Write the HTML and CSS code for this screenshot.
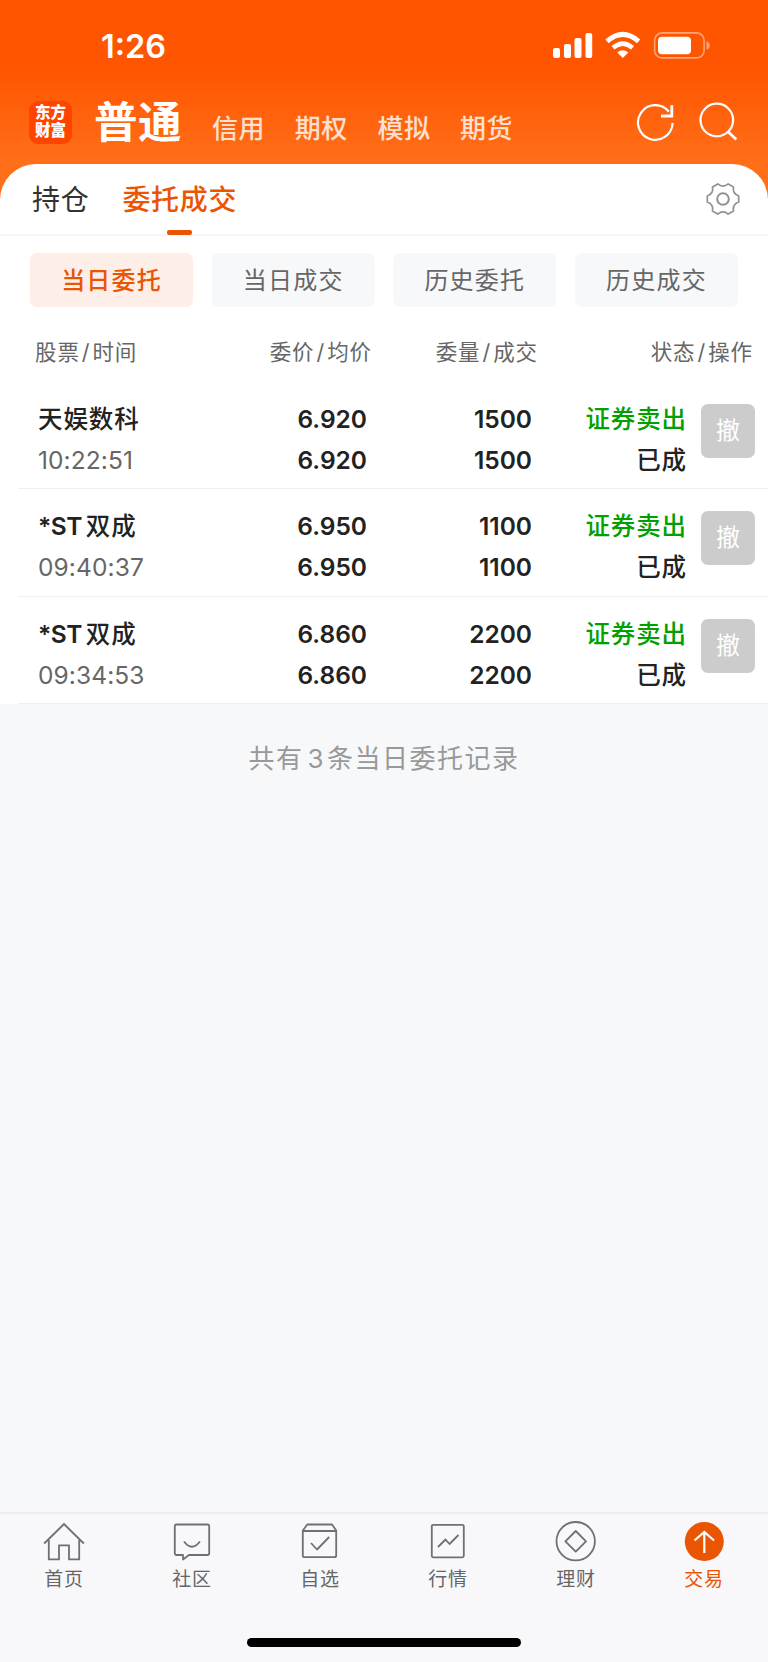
FILE: index.html
```html
<!DOCTYPE html>
<html lang="zh-CN">
<head>
    <meta charset="UTF-8">
    <meta name="viewport" content="width=device-width, initial-scale=1.0">
    <title>委托成交</title>
    <link rel="stylesheet" href="styles.css">
</head>
<body>
    <div class="top">
        <div class="status-bar">
            <span class="time">1:26</span>
            <svg class="status-icons" width="160" height="28" viewBox="0 0 160 28">
                <g fill="#fff">
                    <rect x="1" y="17" width="7" height="10" rx="2"/>
                    <rect x="12" y="13" width="7" height="14" rx="2"/>
                    <rect x="22.5" y="7" width="7" height="20" rx="2"/>
                    <rect x="33.5" y="2" width="6.7" height="25" rx="2"/>
                    <path d="M70.800 27 L65.300 21.500 Q70.800 16.800 76.300 21.500 Z"/>
                    <rect x="106" y="5.800" width="33" height="17.500" rx="4"/>
                </g>
                <path d="M55 10.300 Q70.800 -3.500 86.600 10.300" fill="none" stroke="#fff" stroke-width="5"/>
                <path d="M61 16.800 Q70.800 8.300 80.600 16.800" fill="none" stroke="#fff" stroke-width="4.500"/>
                <rect x="102.600" y="1.900" width="49.500" height="25" rx="7.500" fill="none" stroke="#ffa478" stroke-width="1.600"/>
                <path d="M154.500 10.200 Q157.800 11.500 157.800 14.400 Q157.800 17.300 154.500 18.600 Z" fill="#ffa478"/>
            </svg>
        </div>
        <div class="header">
            <div class="logo"><span>东方</span><span>财富</span></div>
            <a class="account active">普通</a>
            <a class="account">信用</a>
            <a class="account">期权</a>
            <a class="account">模拟</a>
            <a class="account">期货</a>
            <div class="tools">
                <svg width="40" height="40" viewBox="0 0 40 40" fill="none" stroke="#fff" stroke-width="2.200">
                    <path d="M36.600 21 A17.300 17.300 0 1 1 32.900 9.800"/>
                    <path d="M35.800 3.200 V14 H25" stroke-width="2.800"/>
                </svg>
                <svg width="40" height="40" viewBox="0 0 40 40" fill="none" stroke="#fff" stroke-width="2.200">
                    <circle cx="17.800" cy="18" r="16.300"/>
                    <path d="M29.300 30 L37.300 37.500" stroke-width="2.800"/>
                </svg>
            </div>
        </div>
    </div>

    <div class="panel">
        <div class="tabs">
            <a class="tab">持仓</a>
            <a class="tab active">委托成交</a>
            <svg class="gear" width="34" height="34" viewBox="-17 -17 34 34" fill="none" stroke="#919191" stroke-width="1.700" stroke-linejoin="round">
                <path d="M15.700 -3 V3 Q9.200 5.300 10.500 12.100 L5.200 15.100 Q0 10.800 -5.200 15.100 L-10.500 12.100 Q-9.200 5.300 -15.700 3 V-3 Q-9.200 -5.300 -10.500 -12.100 L-5.200 -15.100 Q0 -10.800 5.200 -15.100 L10.500 -12.100 Q9.200 -5.300 15.700 -3 Z"/>
                <circle r="5.800" stroke-width="2"/>
            </svg>
        </div>

        <div class="filters">
            <a class="filter active">当日委托</a>
            <a class="filter">当日成交</a>
            <a class="filter">历史委托</a>
            <a class="filter">历史成交</a>
        </div>

        <div class="table-head">
            <span>股票<i>/</i>时间</span>
            <span>委价<i>/</i>均价</span>
            <span>委量<i>/</i>成交</span>
            <span>状态<i>/</i>操作</span>
        </div>

        <div class="orders">
            <div class="order">
                <div class="stock"><b>天娱数科</b><span>10:22:51</span></div>
                <div class="num"><b>6.920</b><b>6.920</b></div>
                <div class="num"><b>1500</b><b>1500</b></div>
                <div class="state"><b class="sell">证券卖出</b><b>已成</b></div>
                <button class="cancel">撤</button>
            </div>
            <div class="order">
                <div class="stock"><b><em>*ST</em>双成</b><span>09:40:37</span></div>
                <div class="num"><b>6.950</b><b>6.950</b></div>
                <div class="num"><b>1100</b><b>1100</b></div>
                <div class="state"><b class="sell">证券卖出</b><b>已成</b></div>
                <button class="cancel">撤</button>
            </div>
            <div class="order">
                <div class="stock"><b><em>*ST</em>双成</b><span>09:34:53</span></div>
                <div class="num"><b>6.860</b><b>6.860</b></div>
                <div class="num"><b>2200</b><b>2200</b></div>
                <div class="state"><b class="sell">证券卖出</b><b>已成</b></div>
                <button class="cancel">撤</button>
            </div>
        </div>
    </div>

    <div class="total">共有<span>3</span>条当日委托记录</div>

    <div class="bottom">
        <div class="nav">
            <a class="nav-item">
                <svg width="42" height="42" viewBox="0 0 42 42">
                    <path d="M1.200 22.500 L21 3 L40.800 22.500 M5.800 19 V38.400 H16 V24.300 H26 V38.400 H36.200 V19"/>
                </svg>
                <span>首页</span>
            </a>
            <a class="nav-item">
                <svg width="42" height="42" viewBox="0 0 42 42">
                    <path d="M5.500 3.500 H36.500 Q38.200 3.500 38.200 5.200 V32.300 Q38.200 34 36.500 34 H18 L12 38.500 V34 H5.500 Q3.800 34 3.800 32.300 V5.200 Q3.800 3.500 5.500 3.500 Z"/>
                    <path d="M13 20.500 Q20.800 31 29 20.500"/>
                </svg>
                <span>社区</span>
            </a>
            <a class="nav-item">
                <svg width="42" height="42" viewBox="0 0 42 42">
                    <path d="M3.800 9.500 L8.300 3.500 H33 L37.200 9.500 V34.500 Q37.200 36.200 35.500 36.200 H5.500 Q3.800 36.200 3.800 34.500 Z M3.800 10 H37.200"/>
                    <path d="M12 22 L18 28.500 L30.200 16"/>
                </svg>
                <span>自选</span>
            </a>
            <a class="nav-item">
                <svg width="42" height="42" viewBox="0 0 42 42">
                    <rect x="4.800" y="3.800" width="32" height="32.500" rx="1.500"/>
                    <path d="M11 26 L18.500 18.500 L22.500 23 L31.500 14"/>
                </svg>
                <span>行情</span>
            </a>
            <a class="nav-item">
                <svg width="42" height="42" viewBox="0 0 42 42">
                    <circle cx="20.700" cy="20.200" r="19.200"/>
                    <path d="M20.700 10 L31 20.300 L20.700 30.600 L10.400 20.300 Z"/>
                </svg>
                <span>理财</span>
            </a>
            <a class="nav-item active">
                <svg width="42" height="42" viewBox="0 0 42 42">
                    <circle class="dot" cx="21.300" cy="20.600" r="19.500"/>
                    <path class="arrow" d="M21.300 32 V11 M11.500 19.500 L21.300 11 L31.100 19.500"/>
                </svg>
                <span>交易</span>
            </a>
        </div>
        <div class="home-bar"></div>
    </div>
</body>
</html>
```
FILE: styles.css
```css
* {
    box-sizing: border-box;
}
body {
    margin: 0;
    min-height: 1662px;
    display: flex;
    flex-direction: column;
    font-family: Inter, "Noto Sans CJK SC", sans-serif;
    color: #222;
    background-color: #f7f8fa;
}
i, em {
    font-style: normal;
}
.top {
    height: 204px;
    background: linear-gradient(#ff5500 0, #ff5500 68px, #ff6f1a 163px, #ff6f1a 100%);
    color: #fff;
}
.status-bar {
    height: 92px;
    padding: 31px 56px 0 101px;
    display: flex;
    justify-content: space-between;
    align-items: flex-start;
}
.time {
    font-size: 32.5px;
    line-height: 32px;
    font-weight: 600;
}
.header {
    height: 60px;
    padding: 0 29px;
    display: flex;
    align-items: center;
}
.logo {
    width: 43px;
    height: 43px;
    margin-right: 22px;
    border-radius: 9px;
    background-color: #ff4400;
    font-size: 15.5px;
    line-height: 18px;
    font-weight: 900;
    display: flex;
    flex-direction: column;
    align-items: center;
    justify-content: center;
}
.account {
    width: 82.7px;
    padding-top: 14px;
    font-size: 26px;
    line-height: 34px;
    letter-spacing: 0.5px;
    font-weight: 500;
    color: #ffe0d0;
}
.account.active {
    width: 118px;
    padding: 0;
    font-size: 43.5px;
    line-height: 60px;
    font-weight: 700;
    color: #fff;
}
.tools {
    margin-left: auto;
    display: flex;
    gap: 23px;
}
.panel {
    margin-top: -40.500px;
    border-radius: 36px 36px 0 0;
    background-color: #fff;
}
.tabs {
    height: 72px;
    padding: 0 28px 0 32px;
    display: flex;
    align-items: center;
    gap: 33px;
    border-bottom: 2px solid #f7f7f9;
}
.tab {
    position: relative;
    padding-top: 2px;
    font-size: 28px;
    line-height: 70px;
    letter-spacing: 0.7px;
    color: #333;
}
.tab.active {
    font-weight: 500;
    color: #ea5504;
}
.tab.active::after {
    content: "";
    position: absolute;
    left: 45px;
    bottom: 0;
    width: 25px;
    height: 5px;
    border-radius: 2px;
    background-color: #ea5504;
}
.gear {
    margin-left: auto;
}
.filters {
    padding: 17px 30px 0;
    display: grid;
    grid-template-columns: repeat(4, 1fr);
    gap: 18.500px;
}
.filter {
    height: 54px;
    border-radius: 7px;
    background-color: #f7f8fa;
    font-size: 24px;
    line-height: 55px;
    letter-spacing: 1.2px;
    text-align: center;
    color: #666;
}
.filter.active {
    background-color: #fdeee8;
    font-weight: 500;
    color: #ea5504;
}
.table-head {
    height: 75px;
    padding: 0 15px 0 35px;
    display: grid;
    grid-template-columns: 170px 167px 166px 1fr;
    font-size: 21.5px;
    line-height: 90px;
    letter-spacing: 0.9px;
    color: #666;
}
.table-head span + span {
    text-align: right;
}
.table-head i {
    padding: 0 2px;
}
.order {
    height: 107.670px;
    margin-left: 18px;
    padding: 17px 13px 0 20px;
    display: grid;
    grid-template-columns: 168px 161px 165px 155px 1fr;
    border-bottom: 1px solid #f0f0f2;
    font-size: 24.5px;
    line-height: 41px;
}
.order b {
    display: block;
    font-weight: 600;
}
.stock b, .state b {
    font-weight: 500;
    letter-spacing: 0.9px;
}
.stock em {
    margin-right: 4px;
    font-weight: 600;
    letter-spacing: -0.5px;
}
.stock span {
    letter-spacing: 0.1px;
    color: #666;
}
.num {
    text-align: right;
}
.state {
    text-align: right;
}
.state .sell {
    color: #00a000;
}
.cancel {
    width: 54px;
    height: 54px;
    margin: 5px 0 0;
    justify-self: end;
    padding: 0;
    border: none;
    border-radius: 7px;
    background-color: #ccc;
    font-family: inherit;
    font-size: 24px;
    line-height: 54px;
    color: #fff;
}
.total {
    padding-top: 35px;
    font-size: 26px;
    line-height: 40px;
    letter-spacing: 1.5px;
    text-align: center;
    color: #999;
}
.total span {
    padding: 0 2px 0 4px;
}
.bottom {
    margin-top: auto;
    height: 150px;
    border-top: 2px solid #ebecee;
    background-color: #f8f8fb;
}
.nav {
    height: 124px;
    padding-top: 7px;
    display: grid;
    grid-template-columns: repeat(6, 1fr);
}
.nav-item {
    display: flex;
    flex-direction: column;
    align-items: center;
    font-size: 19px;
    line-height: 33px;
    letter-spacing: 0.8px;
    color: #666;
}
.nav-item svg {
    fill: none;
    stroke: #707070;
    stroke-width: 1.8;
    stroke-linejoin: round;
}
.nav-item.active {
    color: #ea5504;
}
.nav-item .dot {
    fill: #ea5504;
    stroke: none;
}
.nav-item .arrow {
    stroke: #fff;
    stroke-width: 2.2;
    stroke-linejoin: miter;
}
.home-bar {
    width: 274px;
    height: 9px;
    margin: 0 auto;
    border-radius: 5px;
    background-color: #000;
}
```
